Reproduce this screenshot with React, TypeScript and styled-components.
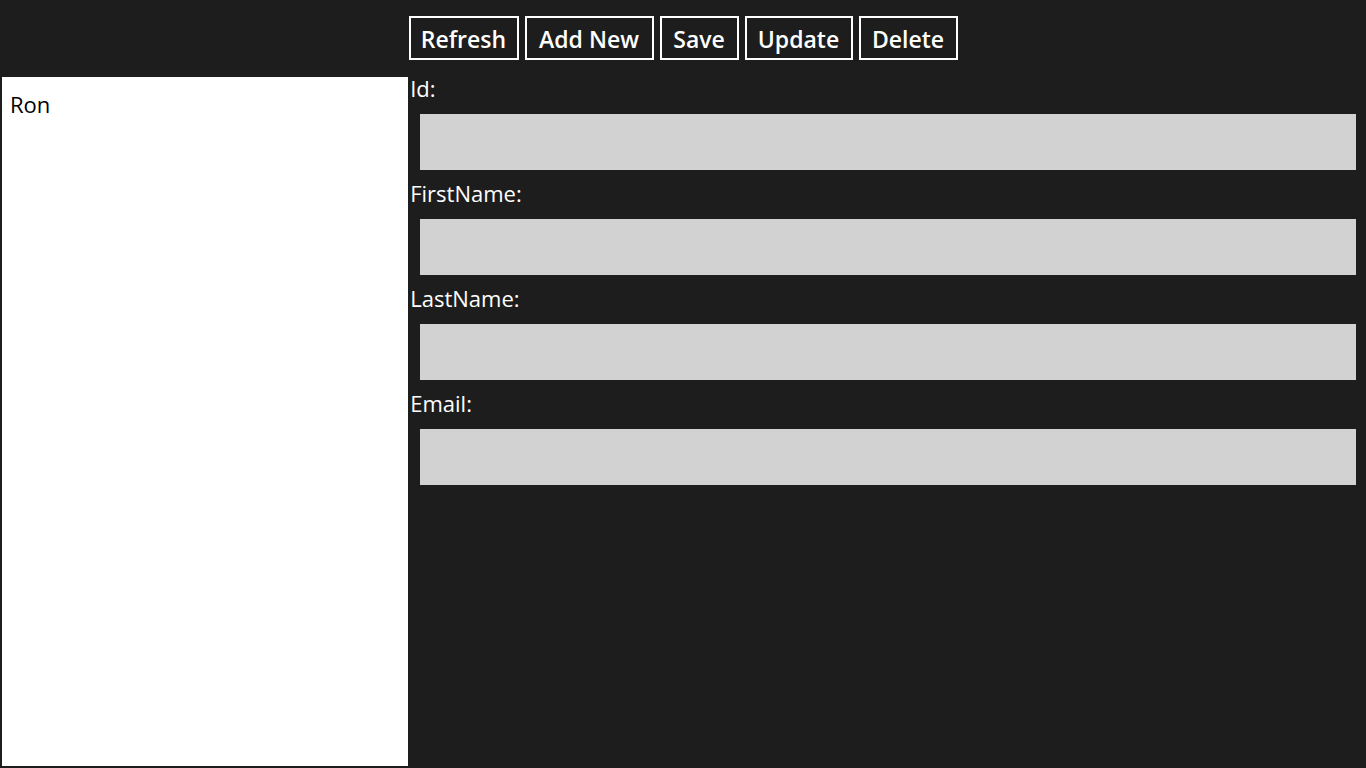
import React, { useState } from "react";
import styled, { createGlobalStyle } from "styled-components";

const GlobalStyle = createGlobalStyle`
  *, *::before, *::after { box-sizing: border-box; }
  body {
    margin: 0;
    background: #1d1d1d;
    color: #ffffff;
    font-family: "Segoe UI", "Open Sans", "Noto Sans", sans-serif;
    font-size: 22px;
    font-weight: 400;
  }
`;

const Page = styled.div`
  display: flex;
  flex-direction: column;
  min-height: 100vh;
`;

const Toolbar = styled.header`
  display: flex;
  justify-content: center;
  gap: 6px;
  padding: 16px 0 17px;
`;

const ToolButton = styled.button<{ $width: number }>`
  width: ${(p) => p.$width}px;
  height: 44px;
  padding: 2px 0 0;
  border: 2px solid #ffffff;
  background: transparent;
  color: inherit;
  font-family: inherit;
  font-size: 23px;
  line-height: 30px;
  font-weight: 600;
  white-space: nowrap;
`;

const Content = styled.main`
  flex: 1;
  display: grid;
  grid-template-columns: 3fr 7fr;
  padding: 0 10px 2px 2px;
`;

const PeopleList = styled.ul`
  margin: 0;
  padding: 12px 8px;
  list-style: none;
  background: #ffffff;
  color: #000000;
`;

const Person = styled.li`
  line-height: 30px;
`;

const Form = styled.form`
  display: flex;
  flex-direction: column;
`;

const Field = styled.div`
  display: flex;
  flex-direction: column;
  gap: 15px;
  height: 105px;
  padding-left: 2px;
`;

const Label = styled.label`
  line-height: 22px;
`;

const TextBox = styled.input`
  height: 56px;
  margin-left: 10px;
  padding: 0 12px;
  border: 0;
  border-radius: 0;
  background: #d2d2d2;
  color: #000000;
  font: inherit;
`;

const actions = [
  { label: "Refresh", width: 110 },
  { label: "Add New", width: 129 },
  { label: "Save", width: 79 },
  { label: "Update", width: 108 },
  { label: "Delete", width: 99 },
];

const fields = ["Id", "FirstName", "LastName", "Email"];
const people = ["Ron"];

export default function App() {
  const [values, setValues] = useState<Record<string, string>>({});

  return (
    <>
      <GlobalStyle />
      <Page>
        <Toolbar>
          {actions.map((a) => (
            <ToolButton key={a.label} type="button" $width={a.width}>
              {a.label}
            </ToolButton>
          ))}
        </Toolbar>
        <Content>
          <PeopleList>
            {people.map((name) => (
              <Person key={name}>{name}</Person>
            ))}
          </PeopleList>
          <Form>
            {fields.map((name) => (
              <Field key={name}>
                <Label htmlFor={name}>{name}:</Label>
                <TextBox
                  id={name}
                  value={values[name] ?? ""}
                  onChange={(e) => setValues({ ...values, [name]: e.target.value })}
                />
              </Field>
            ))}
          </Form>
        </Content>
      </Page>
    </>
  );
}
